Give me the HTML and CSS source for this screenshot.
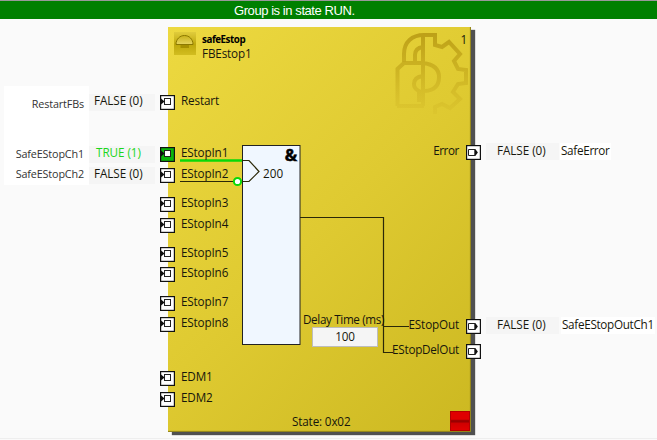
FILE: index.html
```html
<!DOCTYPE html>
<html lang="en">
<head>
<meta charset="utf-8">
<title>FBEstop1</title>
<link rel="stylesheet" href="styles.css">
</head>
<body>
<svg class="defs" width="0" height="0">
  <symbol id="port-in" viewBox="0 0 15 15">
    <rect x=".6" y=".6" width="13.8" height="13.8" fill="var(--port, #fff)" stroke="#111" stroke-width="1.2"/>
    <rect x="4.5" y="3.5" width="6" height="6" fill="#fff" stroke="#222" stroke-width="1"/>
    <path d="M1 3.4 4.6 6.5 1 9.600Z" fill="#111"/>
  </symbol>
  <symbol id="port-out" viewBox="0 0 15 15">
    <rect x=".6" y=".6" width="13.8" height="13.8" fill="#fff" stroke="#111" stroke-width="1.2"/>
    <path d="M8.8 4.5H2.500v6h6.3" fill="none" stroke="#222" stroke-width="1"/>
    <path d="M8.3 4h1L11.900 7.5 9.3 11h-1Z" fill="#111"/>
  </symbol>
</svg>
<header class="status">Group is in state RUN.</header>
<main class="canvas">
  <section class="names">
    <span class="name n-restart">RestartFBs</span>
    <span class="name n-ch1">SafeEStopCh1</span>
    <span class="name">SafeEStopCh2</span>
  </section>
  <section class="values">
    <span class="value v-restart">FALSE (0)</span>
    <span class="value v-true">TRUE (1)</span>
    <span class="value">FALSE (0)</span>
  </section>
  <section class="block">
    <svg class="wires" width="303" height="405" viewBox="0 0 303 405">
      <defs>
        <linearGradient id="fade" gradientUnits="userSpaceOnUse" x1="0" y1="6" x2="0" y2="90">
          <stop offset="0" stop-color="#bda017"/>
          <stop offset=".4" stop-color="#c6ab1d" stop-opacity=".8"/>
          <stop offset="1" stop-color="#cfb423" stop-opacity=".15"/>
        </linearGradient>
      </defs>
      <g fill="none" stroke="url(#fade)" stroke-width="4">
        <path d="M236 35V27C236 15 244 8 256 8H267V18L274 20 281 15 292 27 286 34 290 42 298 43V56L290 57 285 65 292 72 282 81 274 77 267 80V87"/>
        <path d="M255 8V79M247 34V28Q247 21 255 20M229.500 79V42L236 36H255Q271 38 271 50 271 63 257 64M255 49Q246 50 246 57 246 62 251 64V75M229 79H256"/>
      </g>
      <rect x="74.5" y="118.500" width="57.500" height="199" fill="#f0f7ff" stroke="#222"/>
      <g fill="none" stroke="#2b2808" stroke-width="1.2">
        <path d="M74 133.500H81L91 144.500 81 154.500H74M12 154.500H70M132 190.500H215.500V325.500H225M215.500 299.500H241"/>
      </g>
      <path d="M12 133.500H74" stroke="#08d908" stroke-width="2.4"/>
      <circle cx="69.500" cy="154.500" r="3.600" fill="#fff" stroke="#08d908" stroke-width="2"/>
    </svg>
    <header class="head">
      <svg class="estop" width="22" height="23" viewBox="0 0 22 23">
        <defs><linearGradient id="tile" x1="0" y1="0" x2="0" y2="1"><stop offset="0" stop-color="#e0cc3c"/><stop offset=".55" stop-color="#bfa90c"/><stop offset="1" stop-color="#d2bd20"/></linearGradient>
        <linearGradient id="dome" x1="0" y1="0" x2="0" y2="1"><stop offset="0" stop-color="#c9b21a"/><stop offset="1" stop-color="#e6d560"/></linearGradient></defs>
        <rect width="22" height="23" fill="url(#tile)"/>
        <path d="M2 12.500C2 7 6 3.500 10.500 3.500S19 7 19 12.500Z" fill="url(#dome)" stroke="#8c7900" stroke-width="1"/>
        <path d="M6.500 13H15V16H6.500Z" fill="#a69000"/>
      </svg>
      <div class="titles"><b class="type">safeEstop</b><span>FBEstop1</span></div>
      <span class="order">1</span>
    </header>
    <div class="inputs">
      <div class="group g-restart"><div class="pin"><svg class="port"><use href="#port-in"/></svg>Restart</div></div>
      <div class="group g-first"><div class="pin active"><svg class="port"><use href="#port-in"/></svg>EStopIn1</div><div class="pin"><svg class="port"><use href="#port-in"/></svg>EStopIn2</div></div>
      <div class="group"><div class="pin"><svg class="port"><use href="#port-in"/></svg>EStopIn3</div><div class="pin"><svg class="port"><use href="#port-in"/></svg>EStopIn4</div></div>
      <div class="group"><div class="pin short"><svg class="port"><use href="#port-in"/></svg>EStopIn5</div><div class="pin"><svg class="port"><use href="#port-in"/></svg>EStopIn6</div></div>
      <div class="group"><div class="pin"><svg class="port"><use href="#port-in"/></svg>EStopIn7</div><div class="pin"><svg class="port"><use href="#port-in"/></svg>EStopIn8</div></div>
      <div class="group g-edm"><div class="pin"><svg class="port"><use href="#port-in"/></svg>EDM1</div><div class="pin"><svg class="port"><use href="#port-in"/></svg>EDM2</div></div>
    </div>
    <div class="gate"><b class="and">&amp;</b><span class="time">200</span></div>
    <div class="delay"><span class="caption">Delay Time (ms)</span><span class="field">100</span></div>
    <div class="outputs">
      <div class="pin o-error">Error<svg class="port"><use href="#port-out"/></svg></div>
      <div class="pin o-out">EStopOut<svg class="port"><use href="#port-out"/></svg></div>
      <div class="pin o-del">EStopDelOut<svg class="port"><use href="#port-out"/></svg></div>
    </div>
    <footer class="state">State: 0x02</footer>
    <span class="alarm"></span>
  </section>
  <section class="results">
    <div class="result r-error"><span class="value">FALSE (0)</span><span class="tag">SafeError</span></div>
    <div class="result r-out"><span class="value">FALSE (0)</span><span class="tag">SafeEStopOutCh1</span></div>
  </section>
</main>
</body>
</html>
```
FILE: styles.css
```css
* { box-sizing: border-box; }
body {
  margin: 0;
  width: 657px;
  height: 440px;
  overflow: hidden;
  background: #fafafa;
  color: #17170c;
  font: 11.7px/16px "Open Sans", "Noto Sans", sans-serif;
  letter-spacing: -0.15px;
  white-space: nowrap;
}
.defs { position: absolute; }
.status {
  height: 19px;
  padding-left: 234px;
  border-top: 1px solid #999;
  background: #008000;
  color: #fff;
  font: 13px/20px "Liberation Sans", sans-serif;
  letter-spacing: -0.43px;
}
.canvas { display: flex; align-items: flex-start; height: 420px; border-bottom: 1px solid #eee; }
.canvas > * { flex: none; }
.names {
  display: flex;
  flex-direction: column;
  width: 85px;
  height: 99px;
  margin: 67px 0 0 4px;
  padding: 10px 5px 0 0;
  background: #fff;
  color: #333;
  font-size: 10.8px;
  text-align: right;
}
.name { height: 20px; }
.n-restart { margin-bottom: 31px; }
.values { display: flex; flex-direction: column; width: 66px; margin-top: 75px; }
.value { height: 17px; padding-left: 5px; background: #f5f5f5; line-height: 13px; letter-spacing: -0.05px; }
.v-restart { margin-bottom: 35px; }
.v-true { margin-bottom: 4px; padding-left: 7px; color: #1bd61b; }
.block {
  position: relative;
  width: 303px;
  height: 405px;
  margin: 8px 0 0 13px;
  background: linear-gradient(135deg, #edd940 0%, #dfca31 50%, #ccb821 100%);
  box-shadow: inset -1px -1px 1px #8f811a, 4px 3px 1px 0 #505050;
}
.wires { position: absolute; inset: 0; }
.head { position: relative; display: flex; height: 65px; padding: 5px 4px 0 6px; }
.titles { display: flex; flex-direction: column; margin-left: 6px; }
.titles span { line-height: 15px; }
.type { height: 14px; font-size: 9.8px; line-height: 15px; letter-spacing: -0.45px; color: #000; }
.order { margin-left: auto; line-height: 15px; }
.inputs { position: relative; width: 70px; margin-left: -8px; }
.group { margin-top: 8px; }
.g-restart { margin-top: 0; }
.g-first { margin-top: 31px; }
.g-edm { margin-top: 33px; }
.pin { display: flex; gap: 6px; height: 21px; align-items: flex-start; line-height: 17px; }
.short { height: 20px; }
.port { flex: none; width: 15px; height: 15px; margin-top: 3px; }
.active { --port: #0bb50b; }
.gate {
  position: absolute;
  left: 75px;
  top: 119px;
  width: 57px;
  display: flex;
  flex-direction: column;
}
.and { align-self: flex-end; margin-right: 3px; font-size: 16.5px; line-height: 18px; height: 19px; color: #000; -webkit-text-stroke: .5px #000; }
.time { margin-left: 20px; line-height: 17px; letter-spacing: 0.1px; }
.delay { position: absolute; left: 135px; top: 284px; width: 83px; display: flex; flex-direction: column; }
.caption { letter-spacing: -0.36px; }
.field {
  width: 66px;
  height: 20px;
  margin: 0 0 0 9px;
  border: 1px solid #bdbdbd;
  background: #f5f5f5;
  line-height: 17px;
  text-align: center;
}
.outputs { position: absolute; right: -10px; top: 115px; width: 100px; }
.outputs .pin { justify-content: flex-end; gap: 7px; }
.outputs .o-error { letter-spacing: -0.4px; }
.outputs .o-out { margin-top: 153px; }
.outputs .o-del { margin-top: 4px; letter-spacing: -0.25px; }
.state { position: absolute; left: 124px; top: 386px; }
.alarm {
  position: absolute;
  left: 282px;
  top: 384px;
  width: 20px;
  height: 20px;
  border: 1px solid #b50000;
  background: linear-gradient(#e00000 0 40%, #980000 48% 54%, #d00000 64%, #e00000);
}
.results { margin-left: 15px; padding-top: 124px; }
.result { display: flex; gap: 1px; }
.result .value { width: 73px; padding-left: 11px; line-height: 14px; }
.tag { height: 17px; padding: 0 1px; background: #fff; line-height: 14px; letter-spacing: -0.3px; }
.r-out { margin-top: 157px; }
.r-out .tag { margin-left: 1px; }
```
